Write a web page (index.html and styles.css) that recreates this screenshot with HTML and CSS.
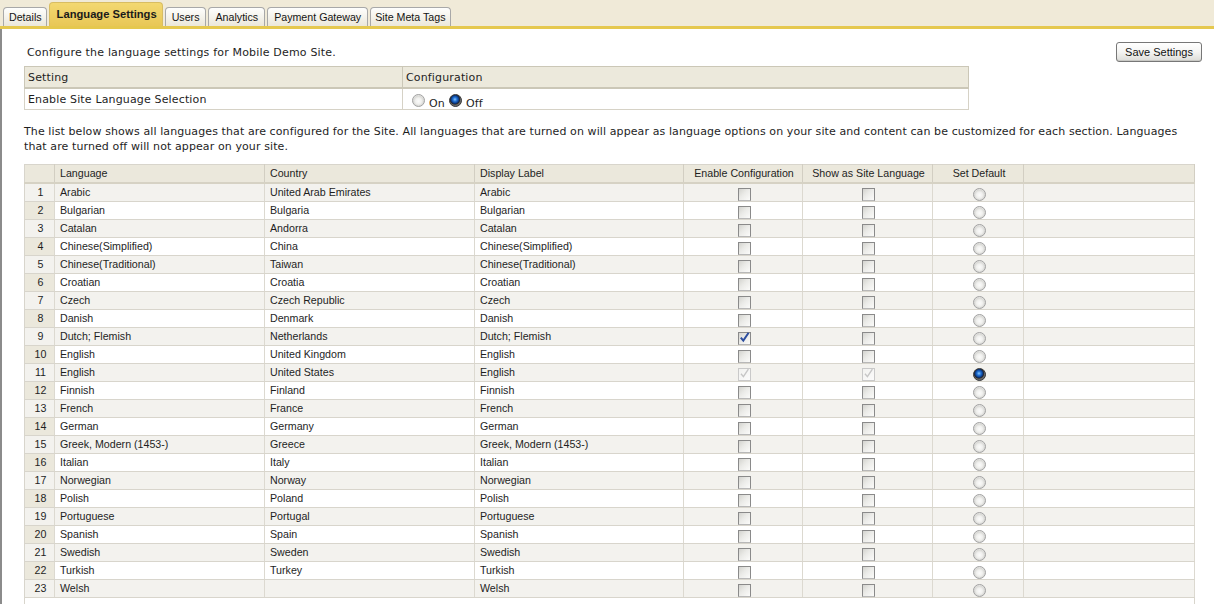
FILE: index.html
```html
<!DOCTYPE html>
<html>
<head>
<meta charset="utf-8">
<title>Language Settings</title>
<link rel="stylesheet" href="styles.css">
</head>
<body>
<div class="tabbar">
  <div class="tab first">Details</div>
  <div class="tab active">Language Settings</div>
  <div class="tab">Users</div>
  <div class="tab">Analytics</div>
  <div class="tab">Payment Gateway</div>
  <div class="tab last">Site Meta Tags</div>
</div>
<div class="main">
  <div class="top">
    <div class="left">
      <div class="intro">Configure the language settings for Mobile Demo Site.</div>
      <table class="settings">
        <tr><th class="s-col">Setting</th><th>Configuration</th></tr>
        <tr>
          <td class="s-col">Enable Site Language Selection</td>
          <td>
            <div class="onoff">
              <span class="rd"></span><span class="lbl">On</span>
              <span class="rd on"></span><span class="lbl">Off</span>
            </div>
          </td>
        </tr>
      </table>
    </div>
    <button class="save">Save Settings</button>
  </div>
  <p class="desc">The list below shows all languages that are configured for the Site. All languages that are turned on will appear as language options on your site and content can be customized for each section. Languages<br>that are turned off will not appear on your site.</p>
  <table class="langs">
    <colgroup>
      <col class="w-num"><col class="w-lang"><col class="w-country"><col class="w-label"><col class="w-en"><col class="w-show"><col class="w-def"><col>
    </colgroup>
    <thead>
      <tr><th></th><th>Language</th><th>Country</th><th>Display Label</th><th class="c">Enable Configuration</th><th class="c">Show as Site Language</th><th class="c">Set Default</th><th></th></tr>
    </thead>
    <tbody>
      <tr><td class="num">1</td><td>Arabic</td><td>United Arab Emirates</td><td>Arabic</td><td class="c"><span class="cb"></span></td><td class="c"><span class="cb"></span></td><td class="c"><span class="rd"></span></td><td></td></tr>
      <tr><td class="num">2</td><td>Bulgarian</td><td>Bulgaria</td><td>Bulgarian</td><td class="c"><span class="cb"></span></td><td class="c"><span class="cb"></span></td><td class="c"><span class="rd"></span></td><td></td></tr>
      <tr><td class="num">3</td><td>Catalan</td><td>Andorra</td><td>Catalan</td><td class="c"><span class="cb"></span></td><td class="c"><span class="cb"></span></td><td class="c"><span class="rd"></span></td><td></td></tr>
      <tr><td class="num">4</td><td>Chinese(Simplified)</td><td>China</td><td>Chinese(Simplified)</td><td class="c"><span class="cb"></span></td><td class="c"><span class="cb"></span></td><td class="c"><span class="rd"></span></td><td></td></tr>
      <tr><td class="num">5</td><td>Chinese(Traditional)</td><td>Taiwan</td><td>Chinese(Traditional)</td><td class="c"><span class="cb"></span></td><td class="c"><span class="cb"></span></td><td class="c"><span class="rd"></span></td><td></td></tr>
      <tr><td class="num">6</td><td>Croatian</td><td>Croatia</td><td>Croatian</td><td class="c"><span class="cb"></span></td><td class="c"><span class="cb"></span></td><td class="c"><span class="rd"></span></td><td></td></tr>
      <tr><td class="num">7</td><td>Czech</td><td>Czech Republic</td><td>Czech</td><td class="c"><span class="cb"></span></td><td class="c"><span class="cb"></span></td><td class="c"><span class="rd"></span></td><td></td></tr>
      <tr><td class="num">8</td><td>Danish</td><td>Denmark</td><td>Danish</td><td class="c"><span class="cb"></span></td><td class="c"><span class="cb"></span></td><td class="c"><span class="rd"></span></td><td></td></tr>
      <tr><td class="num">9</td><td>Dutch; Flemish</td><td>Netherlands</td><td>Dutch; Flemish</td><td class="c"><span class="cb"><svg class="chk" width="11" height="11" viewBox="0 0 11 11"><path d="M1.8 5.6 L4.3 8.6 L9.6 0.8" fill="none" stroke="#2c4d9e" stroke-width="2"/></svg></span></td><td class="c"><span class="cb"></span></td><td class="c"><span class="rd"></span></td><td></td></tr>
      <tr><td class="num">10</td><td>English</td><td>United Kingdom</td><td>English</td><td class="c"><span class="cb"></span></td><td class="c"><span class="cb"></span></td><td class="c"><span class="rd"></span></td><td></td></tr>
      <tr><td class="num">11</td><td>English</td><td>United States</td><td>English</td><td class="c"><span class="cb dis"><svg class="chk" width="11" height="11" viewBox="0 0 11 11"><path d="M2 5.8 L4.4 8.6 L9.4 1.2" fill="none" stroke="#c6c6c6" stroke-width="1.4"/></svg></span></td><td class="c"><span class="cb dis"><svg class="chk" width="11" height="11" viewBox="0 0 11 11"><path d="M2 5.8 L4.4 8.6 L9.4 1.2" fill="none" stroke="#c6c6c6" stroke-width="1.4"/></svg></span></td><td class="c"><span class="rd on"></span></td><td></td></tr>
      <tr><td class="num">12</td><td>Finnish</td><td>Finland</td><td>Finnish</td><td class="c"><span class="cb"></span></td><td class="c"><span class="cb"></span></td><td class="c"><span class="rd"></span></td><td></td></tr>
      <tr><td class="num">13</td><td>French</td><td>France</td><td>French</td><td class="c"><span class="cb"></span></td><td class="c"><span class="cb"></span></td><td class="c"><span class="rd"></span></td><td></td></tr>
      <tr><td class="num">14</td><td>German</td><td>Germany</td><td>German</td><td class="c"><span class="cb"></span></td><td class="c"><span class="cb"></span></td><td class="c"><span class="rd"></span></td><td></td></tr>
      <tr><td class="num">15</td><td>Greek, Modern (1453-)</td><td>Greece</td><td>Greek, Modern (1453-)</td><td class="c"><span class="cb"></span></td><td class="c"><span class="cb"></span></td><td class="c"><span class="rd"></span></td><td></td></tr>
      <tr><td class="num">16</td><td>Italian</td><td>Italy</td><td>Italian</td><td class="c"><span class="cb"></span></td><td class="c"><span class="cb"></span></td><td class="c"><span class="rd"></span></td><td></td></tr>
      <tr><td class="num">17</td><td>Norwegian</td><td>Norway</td><td>Norwegian</td><td class="c"><span class="cb"></span></td><td class="c"><span class="cb"></span></td><td class="c"><span class="rd"></span></td><td></td></tr>
      <tr><td class="num">18</td><td>Polish</td><td>Poland</td><td>Polish</td><td class="c"><span class="cb"></span></td><td class="c"><span class="cb"></span></td><td class="c"><span class="rd"></span></td><td></td></tr>
      <tr><td class="num">19</td><td>Portuguese</td><td>Portugal</td><td>Portuguese</td><td class="c"><span class="cb"></span></td><td class="c"><span class="cb"></span></td><td class="c"><span class="rd"></span></td><td></td></tr>
      <tr><td class="num">20</td><td>Spanish</td><td>Spain</td><td>Spanish</td><td class="c"><span class="cb"></span></td><td class="c"><span class="cb"></span></td><td class="c"><span class="rd"></span></td><td></td></tr>
      <tr><td class="num">21</td><td>Swedish</td><td>Sweden</td><td>Swedish</td><td class="c"><span class="cb"></span></td><td class="c"><span class="cb"></span></td><td class="c"><span class="rd"></span></td><td></td></tr>
      <tr><td class="num">22</td><td>Turkish</td><td>Turkey</td><td>Turkish</td><td class="c"><span class="cb"></span></td><td class="c"><span class="cb"></span></td><td class="c"><span class="rd"></span></td><td></td></tr>
      <tr><td class="num">23</td><td>Welsh</td><td></td><td>Welsh</td><td class="c"><span class="cb"></span></td><td class="c"><span class="cb"></span></td><td class="c"><span class="rd"></span></td><td></td></tr>
    </tbody>
    <tfoot>
      <tr><td class="foot" colspan="8"></td></tr>
    </tfoot>
  </table>
</div>
</body>
</html>
```
FILE: styles.css
```css
html, body {
  margin: 0;
  padding: 0;
  background: #fff;
}
body {
  font-family: "Liberation Sans", Arial, sans-serif;
  font-size: 10.67px;
  color: #1e1e1e;
}

/* tabs */
.tabbar {
  height: 26px;
  background: #f0ead8;
  border-bottom: 3px solid #e5c84f;
  display: flex;
  align-items: flex-end;
  gap: 2px;
  padding-left: 3px;
}
.tab {
  box-sizing: border-box;
  height: 19px;
  line-height: 19px;
  padding: 0 6px;
  border: 1px solid #a8a8a8;
  border-bottom: none;
  border-radius: 4px 4px 0 0;
  background: linear-gradient(#fefefd, #ebe7da);
  color: #141414;
  font-size: 10.67px;
  white-space: nowrap;
}
.tab.first {
  padding: 0 4px 0 5px;
}
.tab.last {
  padding: 0 4px;
}
.tab.active {
  height: 24px;
  line-height: 23px;
  padding: 0 5px 0 7px;
  border-color: #d8bd62;
  background: linear-gradient(#f3d871, #e8c757);
  font-weight: bold;
  font-size: 11.2px;
  color: #1a1a1a;
}

/* main */
.main {
  border-left: 2px solid #8b8b8b;
  padding: 13px 8px 0 22px;
}
.top {
  display: flex;
  justify-content: space-between;
  align-items: flex-start;
}
.left {
  margin-top: 3px;
}
.intro {
  font-family: "DejaVu Sans", Verdana, sans-serif;
  font-size: 11px;
  letter-spacing: 0.18px;
  line-height: 15px;
  margin-left: 3px;
  color: #1e1e1e;
}
.save {
  margin: 0 4px 0 0;
  width: 86px;
  height: 20px;
  padding: 0;
  border: 1px solid #777;
  border-radius: 3px;
  background: linear-gradient(#ffffff, #f4f4f2 50%, #dcdcd8);
  box-shadow: inset 0 -1px 0 #c8c8c4;
  font-family: "Liberation Sans", Arial, sans-serif;
  font-size: 11px;
  color: #111;
}

/* settings table */
.settings {
  margin-top: 6px;
  width: 945px;
  border-collapse: collapse;
  font-family: "DejaVu Sans", Verdana, sans-serif;
  font-size: 11px;
  letter-spacing: 0.15px;
}
.settings th {
  height: 20px;
  padding: 0 3px;
  text-align: left;
  font-weight: normal;
  background: #ece9dc;
  border: 1px solid #cbc7b7;
  border-bottom-width: 2px;
}
.settings td {
  height: 20px;
  padding: 0 3px;
  border: 1px solid #d6d2c6;
}
.settings .s-col {
  width: 371px;
}
.onoff {
  display: flex;
  align-items: flex-end;
  padding: 3px 0 0 6px;
}
.onoff .lbl {
  margin: 0 4px 0 4px;
  line-height: 12px;
  position: relative;
  top: 3px;
}

.desc {
  margin: 14px 0 10px;
  font-family: "DejaVu Sans", Verdana, sans-serif;
  font-size: 11px;
  letter-spacing: 0.1px;
  line-height: 15px;
  white-space: nowrap;
  color: #1e1e1e;
}

/* languages table */
.langs {
  width: 1171px;
  table-layout: fixed;
  border-collapse: collapse;
  border: 1px solid #d8d5cc;
}
.w-num { width: 30px; }
.w-lang { width: 210px; }
.w-country { width: 210px; }
.w-label { width: 209px; }
.w-en { width: 119px; }
.w-show { width: 130px; }
.w-def { width: 91px; }

.langs th {
  height: 17px;
  line-height: 17px;
  padding: 0 5px;
  background: #ebe8dc;
  font-weight: normal;
  text-align: left;
  border-right: 1px solid #d2cec2;
  border-bottom: 2px solid #d6d2c4;
  white-space: nowrap;
  overflow: hidden;
}
.langs th.c {
  text-align: center;
  padding: 0 0 0 2px;
}
.langs td {
  height: 17px;
  line-height: 17px;
  padding: 0 5px;
  border-right: 1px solid #dcd9d0;
  border-bottom: 1px solid #d8d5cc;
  white-space: nowrap;
  overflow: hidden;
  vertical-align: top;
}
.langs tbody tr:nth-child(odd) td {
  background: #f3f2ee;
}
.langs tbody td.num {
  background: #ebe8dc;
  text-align: center;
  padding: 0 0 0 2px;
}
.langs td.c {
  text-align: center;
  padding: 0 0 0 2px;
}
.langs td.foot {
  height: 30px;
  border: none;
  background: #fff;
}

/* controls */
.cb {
  display: inline-block;
  vertical-align: top;
  box-sizing: border-box;
  width: 13px;
  height: 13px;
  margin-top: 4px;
  border: 1px solid #8a8a8a;
  border-bottom-color: #b8b8b8;
  background: linear-gradient(135deg, #d3d3cf 0%, #ebebe8 45%, #fbfbfa 100%);
  position: relative;
}
.cb.dis {
  border-color: #c9c9c9;
  background: linear-gradient(135deg, #f2f2f0, #fbfbfb);
}
.cb .chk {
  display: block;
  margin: -1px 0 0 0;
}
.rd {
  display: inline-block;
  vertical-align: top;
  box-sizing: border-box;
  width: 13px;
  height: 13px;
  margin-top: 4px;
  border-radius: 50%;
  border: 1px solid #a2a2a2;
  background: radial-gradient(circle at 50% 55%, #fbfbfb 0, #f0f0ee 3px, #d9d9d6 5px, #e8e8e6 6px);
}
.rd.on {
  border-color: #3a3a3a;
  background: radial-gradient(circle at 45% 40%, #8cc8ff 0, #2a7ad8 1.8px, #114ea6 3.2px, #0b2f6a 4.2px, #2a2a2a 4.8px, #6a6a6a 5.6px);
}
.onoff .rd {
  margin-top: 0;
}
```
